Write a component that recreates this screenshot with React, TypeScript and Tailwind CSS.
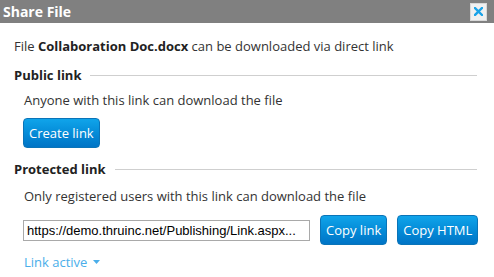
import React from 'react';

const btn =
  'h-[30px] px-[5px] rounded-[4px] border border-[#0a74b8] bg-gradient-to-b from-[#10a4ea] to-[#0074c6] text-white text-[13px] leading-none';

const SectionTitle: React.FC<{ title: string }> = ({ title }) => (
  <div className="flex items-center gap-[9px] pr-[17px]">
    <span className="font-bold text-[13px] text-[#222] leading-[18px]">{title}</span>
    <div className="flex-1 h-px bg-[#cfcfcf]" />
  </div>
);

const App: React.FC = () => {
  return (
    <div
      className="w-[494px] h-[277px] bg-white overflow-hidden"
      style={{ fontFamily: '"Open Sans", sans-serif' }}
    >
      {/* Title bar */}
      <div className="h-[23px] bg-[#808080] flex items-center justify-between pl-[3px] pr-[7px]">
        <span className="text-white font-bold text-[14px] leading-none">Share File</span>
        <button className="w-[17px] h-[18px] bg-[#f0f0f0] border border-[#d8d8d8] flex items-center justify-center">
          <svg width="9" height="9" viewBox="0 0 9 9">
            <path d="M1 1 L8 8 M8 1 L1 8" stroke="#1aa3e8" strokeWidth="2.4" strokeLinecap="square" />
          </svg>
        </button>
      </div>

      <div className="pl-[14px] pt-[14px]">
        <p className="text-[13px] text-[#333] leading-[18px]">
          File <span className="font-bold text-[#222]">Collaboration Doc.docx</span> can be downloaded via direct link
        </p>

        <div className="mt-[11px]">
          <SectionTitle title="Public link" />
        </div>
        <div className="pl-[10px]">
          <p className="mt-[7px] text-[13px] text-[#333] leading-[18px]">Anyone with this link can download the file</p>
          <button className={`${btn} mt-[9px] -ml-px`}>Create link</button>
        </div>

        <div className="mt-[12px]">
          <SectionTitle title="Protected link" />
        </div>
        <div className="pl-[10px]">
          <p className="mt-[9px] text-[13px] text-[#333] leading-[18px]">
            Only registered users with this link can download the file
          </p>
          <div className="mt-[10px] flex items-center -ml-px">
            <input
              readOnly
              value="https://demo.thruinc.net/Publishing/Link.aspx..."
              className="w-[287px] h-[21px] border border-[#a9a9a9] px-[3px] text-[13px] text-black outline-none"
              style={{ fontFamily: '"Liberation Sans", Arial, sans-serif' }}
            />
            <button className={`${btn} ml-[10px]`}>Copy link</button>
            <button className={`${btn} ml-[10px]`}>Copy HTML</button>
          </div>
          <div className="mt-[8px] flex items-center gap-[6px] text-[13px] text-[#4aaeea] leading-[18px]">
            <span>Link active</span>
            <svg width="7" height="4" viewBox="0 0 7 4">
              <path d="M0 0 H7 L3.5 4 Z" fill="#4aaeea" />
            </svg>
          </div>
        </div>
      </div>
    </div>
  );
};

export default App;
